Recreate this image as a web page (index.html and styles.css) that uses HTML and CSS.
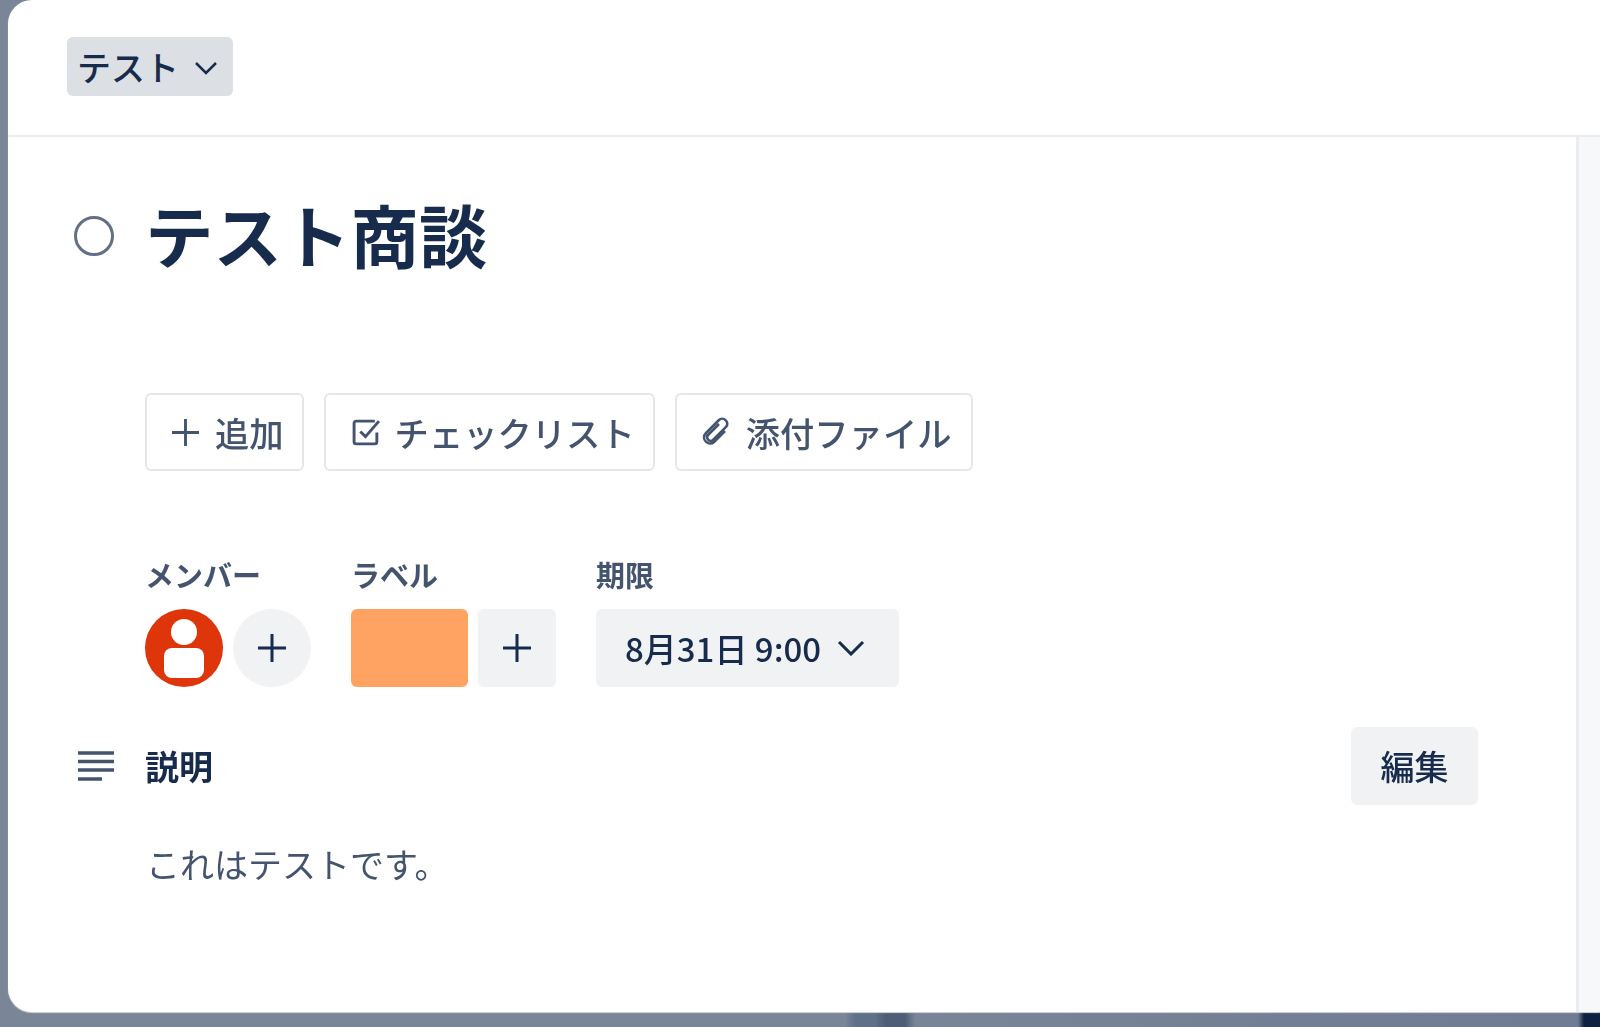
FILE: index.html
```html
<!DOCTYPE html>
<html lang="ja">
<head>
<meta charset="utf-8">
<title>テスト商談</title>
<link rel="stylesheet" href="styles.css">
</head>
<body>
<div class="modal">
  <header class="modal-head">
    <button class="list-tag">テスト
      <svg class="chev-sm" viewBox="0 0 24 14"><path d="M2 2l10 10L22 2"/></svg>
    </button>
  </header>
  <div class="modal-main">
    <main class="content">
      <div class="title-row">
        <span class="status-circle"></span>
        <h1 class="title">テスト商談</h1>
      </div>
      <div class="actions">
        <button class="action action-plus">
          <svg class="plus-icon" viewBox="0 0 30 30"><path d="M15 1v28M1 15h28"/></svg>
          <span>追加</span>
        </button>
        <button class="action action-check">
          <svg class="check-icon" viewBox="0 0 28 28"><path d="M24 14v9a2 2 0 0 1-2 2H4a2 2 0 0 1-2-2V5a2 2 0 0 1 2-2h18"/><path d="M8 13l5 5L26 3"/></svg>
          <span>チェックリスト</span>
        </button>
        <button class="action action-clip">
          <svg class="clip-icon" viewBox="0 0 32 32"><path d="M19 8L8 19c-3 3 2 8 5 5l13-13c4-5-3-11-7-7L6 17c-6 6 3 14 8 9l11-11"/></svg>
          <span>添付ファイル</span>
        </button>
      </div>
      <div class="meta">
        <section class="meta-col">
          <h2 class="meta-label">メンバー</h2>
          <div class="meta-row">
            <svg class="avatar" viewBox="0 0 78 78">
              <circle cx="39" cy="39" r="39" fill="#de350b"/>
              <circle cx="39" cy="23" r="13" fill="#fff"/>
              <rect x="19" y="39" width="40" height="30" rx="8" fill="#fff"/>
            </svg>
            <button class="add add-round"><svg class="plus-dark" viewBox="0 0 30 30"><path d="M15 1v28M1 15h28"/></svg></button>
          </div>
        </section>
        <section class="meta-col">
          <h2 class="meta-label">ラベル</h2>
          <div class="meta-row">
            <span class="label-chip"></span>
            <button class="add"><svg class="plus-dark" viewBox="0 0 30 30"><path d="M15 1v28M1 15h28"/></svg></button>
          </div>
        </section>
        <section class="meta-col">
          <h2 class="meta-label">期限</h2>
          <button class="date">8月31日 9:00
            <svg class="chev-lg" viewBox="0 0 28 16"><path d="M2 2l12 12L26 2"/></svg>
          </button>
        </section>
      </div>
      <div class="desc-head">
        <svg class="lines-icon" viewBox="0 0 38 30"><path d="M1 2h36M1 10.500h36M1 19h36M1 28h24"/></svg>
        <h2 class="desc-title">説明</h2>
        <button class="edit">編集</button>
      </div>
      <p class="desc-body">これはテストです。</p>
    </main>
    <aside class="side"></aside>
  </div>
</div>
</body>
</html>
```
FILE: styles.css
```css
* { box-sizing: border-box; }
html, body { margin: 0; height: 1027px; overflow: hidden; }
body {
  padding: 0 0 15px 8px;
  background:
    linear-gradient(90deg, transparent 845px, #5f7089 855px, #5f7089 875px, #4e5e76 885px, #4e5e76 905px, transparent 915px, transparent 1578px, #0f2140 1584px),
    linear-gradient(90deg, #7a8698 0%, #7a8698 50%, #6f7b92 100%);
  font-family: "Noto Sans CJK JP", "Noto Sans", sans-serif;
  color: #172b4d;
}
button { font-family: inherit; border: 0; padding: 0; margin: 0; font-weight: 500; }
h1, h2, p { margin: 0; }

.modal {
  width: 1592px;
  height: 1012px;
  background: #fff;
  border-radius: 24px 0 0 24px;
  display: flex;
  flex-direction: column;
  overflow: hidden;
  box-shadow: 0 1px 1px #d5d8de;
  filter: blur(0.5px);
}
.modal-head {
  height: 137px;
  flex: none;
  padding: 37px 0 0 59px;
  border-bottom: 2px solid #ebecf0;
}
.list-tag {
  width: 166px;
  height: 59px;
  background: #dcdfe4;
  border-radius: 6px;
  font-size: 34px;
  color: #172b4d;
  display: flex;
  align-items: center;
  justify-content: space-between;
  padding: 0 15px 0 10px;
  line-height: 1;
}
.chev-sm { width: 24px; height: 14px; fill: none; stroke: #172b4d; stroke-width: 2.500; margin-top: 3px; }

.modal-main { flex: 1; display: flex; min-height: 0; }
.content { flex: 1; padding: 0 0 0 65px; min-width: 0; }
.side { width: 24px; flex: none; background: #f7f8f9; border-left: 3px solid #ebecf0; }

.title-row { display: flex; align-items: center; height: 156px; padding-top: 39px; margin-bottom: 100px; }
.status-circle {
  width: 40px; height: 40px; border-radius: 50%;
  border: 3px solid #626f86;
  flex: none;
  margin: 3px 31px 0 1px;
}
.title { font-size: 68.500px; font-weight: 700; line-height: 1; color: #172b4d; }

.actions { display: flex; gap: 20px; padding-left: 72px; }
.action {
  height: 78px;
  background: #fff;
  border: 2px solid #e4e6ea;
  border-radius: 6px;
  display: flex;
  align-items: center;
  font-size: 34.300px;
  color: #44546f;
  padding: 0 18px 0 24px;
  gap: 14px;
  line-height: 1;
}
.action-plus { gap: 15px; }
.plus-icon { width: 29px; height: 29px; fill: none; stroke: #44546f; stroke-width: 3; }
.action-check { padding: 0 18px 0 26px; }
.action-clip { padding: 0 19px 0 23px; }
.check-icon { width: 29px; height: 29px; fill: none; stroke: #44546f; stroke-width: 2.800; }
.clip-icon { width: 32px; height: 34px; fill: none; stroke: #44546f; stroke-width: 2.500; }

.meta { display: flex; gap: 40px; padding-left: 72px; margin-top: 86px; }
.meta-col { display: flex; flex-direction: column; }
.meta-label { font-size: 29px; font-weight: 700; color: #44546f; line-height: 34px; margin-bottom: 18px; }
.meta-row { display: flex; gap: 10px; }
.avatar { width: 78px; height: 78px; flex: none; }
.add {
  width: 78px; height: 78px; background: #f1f2f4; border-radius: 6px;
  display: flex; align-items: center; justify-content: center;
}
.add-round { border-radius: 50%; }
.plus-dark { width: 30px; height: 30px; fill: none; stroke: #172b4d; stroke-width: 3; }
.label-chip { width: 117px; height: 78px; background: #fea362; border-radius: 6px; }
.date {
  width: 303px; height: 78px; background: #f1f2f4; border-radius: 6px;
  font-size: 33px; color: #172b4d;
  display: flex; align-items: center; justify-content: space-between;
  padding: 0 34px 0 29px; line-height: 1;
}
.chev-lg { width: 28px; height: 16px; fill: none; stroke: #172b4d; stroke-width: 3; }

.desc-head { display: flex; align-items: center; margin-top: 40px; padding-right: 98px; }
.lines-icon { width: 38px; height: 30px; fill: none; stroke: #44546f; stroke-width: 3.500; flex: none; margin-left: 4px; margin-right: 30px; }
.desc-title { font-size: 34px; font-weight: 700; flex: 1; line-height: 1; color: #172b4d; }
.edit {
  width: 127px; height: 78px; background: #f1f2f4; border-radius: 6px;
  font-size: 34px; color: #172b4d; line-height: 1;
}
.desc-body { font-size: 34px; line-height: 1.5; color: #44546f; padding-left: 73px; margin-top: 33px; }
```
